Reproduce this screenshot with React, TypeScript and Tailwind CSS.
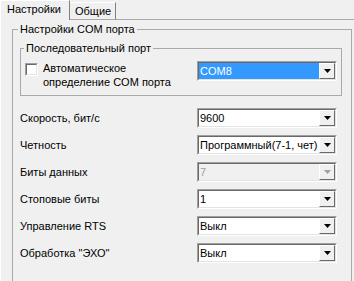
import React from 'react';

const rows = [
  { label: 'Скорость, бит/с', value: '9600' },
  { label: 'Четность', value: 'Программный(7-1, чет)' },
  { label: 'Биты данных', value: '7', disabled: true },
  { label: 'Стоповые биты', value: '1' },
  { label: 'Управление RTS', value: 'Выкл' },
  { label: 'Обработка "ЭХО"', value: 'Выкл' },
];

function Arrow({ disabled }: { disabled?: boolean }) {
  return (
    <svg width="7" height="4" viewBox="0 0 7 4">
      <path d="M0 0h7L3.5 4z" fill={disabled ? '#a0a0a0' : '#000'} />
    </svg>
  );
}

function Combo({ value, selected, disabled }: { value: string; selected?: boolean; disabled?: boolean }) {
  return (
    <div className="w-[140px] h-[20px] border border-t-[#a0a0a0] border-l-[#a0a0a0] border-b-white border-r-white">
      <div className={`h-full flex border border-t-[#696969] border-l-[#696969] border-b-[#e3e3e3] border-r-[#e3e3e3] ${disabled ? 'bg-[#f0f0f0]' : 'bg-white'}`}>
        <div className={`flex-1 pl-[1px] leading-[16px] whitespace-nowrap overflow-hidden ${selected ? 'bg-[#3399ff] text-white' : disabled ? 'text-[#a0a0a0]' : 'text-black'}`}>
          {value}
        </div>
        <div className="w-[16px] h-full flex items-center justify-center bg-[#f0f0f0] border border-t-white border-l-white border-b-[#696969] border-r-[#696969]">
          <Arrow disabled={disabled} />
        </div>
      </div>
    </div>
  );
}

export default function App() {
  return (
    <div className="w-[354px] h-[281px] bg-[#f0f0f0] overflow-hidden flex flex-col font-['Liberation_Sans',Arial,sans-serif] text-[11px] text-black">
      {/* Tabs */}
      <div className="flex items-end h-[20px] shrink-0">
        <div className="w-[70px] h-[20px] pl-[6px] pb-[2px] flex items-center border-t border-l border-r border-t-white border-l-white border-r-[#808080]">
          Настройки
        </div>
        <div className="w-[46px] h-[18px] pl-[5px] flex items-center border-t border-r border-b border-t-white border-r-[#808080] border-b-[#a9a9a9]">
          Общие
        </div>
        <div className="flex-1 h-full border-b border-b-[#a9a9a9]" />
      </div>

      {/* Panel */}
      <div className="flex-1 border-l border-l-white">
        <fieldset className="ml-[11px] mt-[3px] w-[340px] pl-[7px] pr-[9px] pt-[6px] pb-[40px] border border-[#a9a9a9]">
          <legend className="-ml-[2px] px-[2px] leading-[13px]">Настройки COM порта</legend>

          <fieldset className="pl-[3px] pr-[4px] pt-[6px] pb-[6px] border border-[#a9a9a9]">
            <legend className="px-[2px] leading-[13px]">Последовательный порт</legend>
            <div className="flex items-start justify-between">
              <div className="flex items-start ml-[1px]">
                <div className="mt-[2px] w-[13px] h-[13px] border border-t-[#a0a0a0] border-l-[#a0a0a0] border-b-white border-r-white">
                  <div className="w-full h-full bg-white border border-t-[#696969] border-l-[#696969] border-b-[#e3e3e3] border-r-[#e3e3e3]" />
                </div>
                <div className="ml-[5px] leading-[14px]">
                  <div>Автоматическое</div>
                  <div>определение COM порта</div>
                </div>
              </div>
              <Combo value="COM8" selected />
            </div>
          </fieldset>

          <div className="mt-[12px] pr-[5px] flex flex-col gap-[7px]">
            {rows.map(r => (
              <div key={r.label} className="flex items-center justify-between">
                <span>{r.label}</span>
                <Combo value={r.value} disabled={r.disabled} />
              </div>
            ))}
          </div>
        </fieldset>
      </div>
    </div>
  );
}
